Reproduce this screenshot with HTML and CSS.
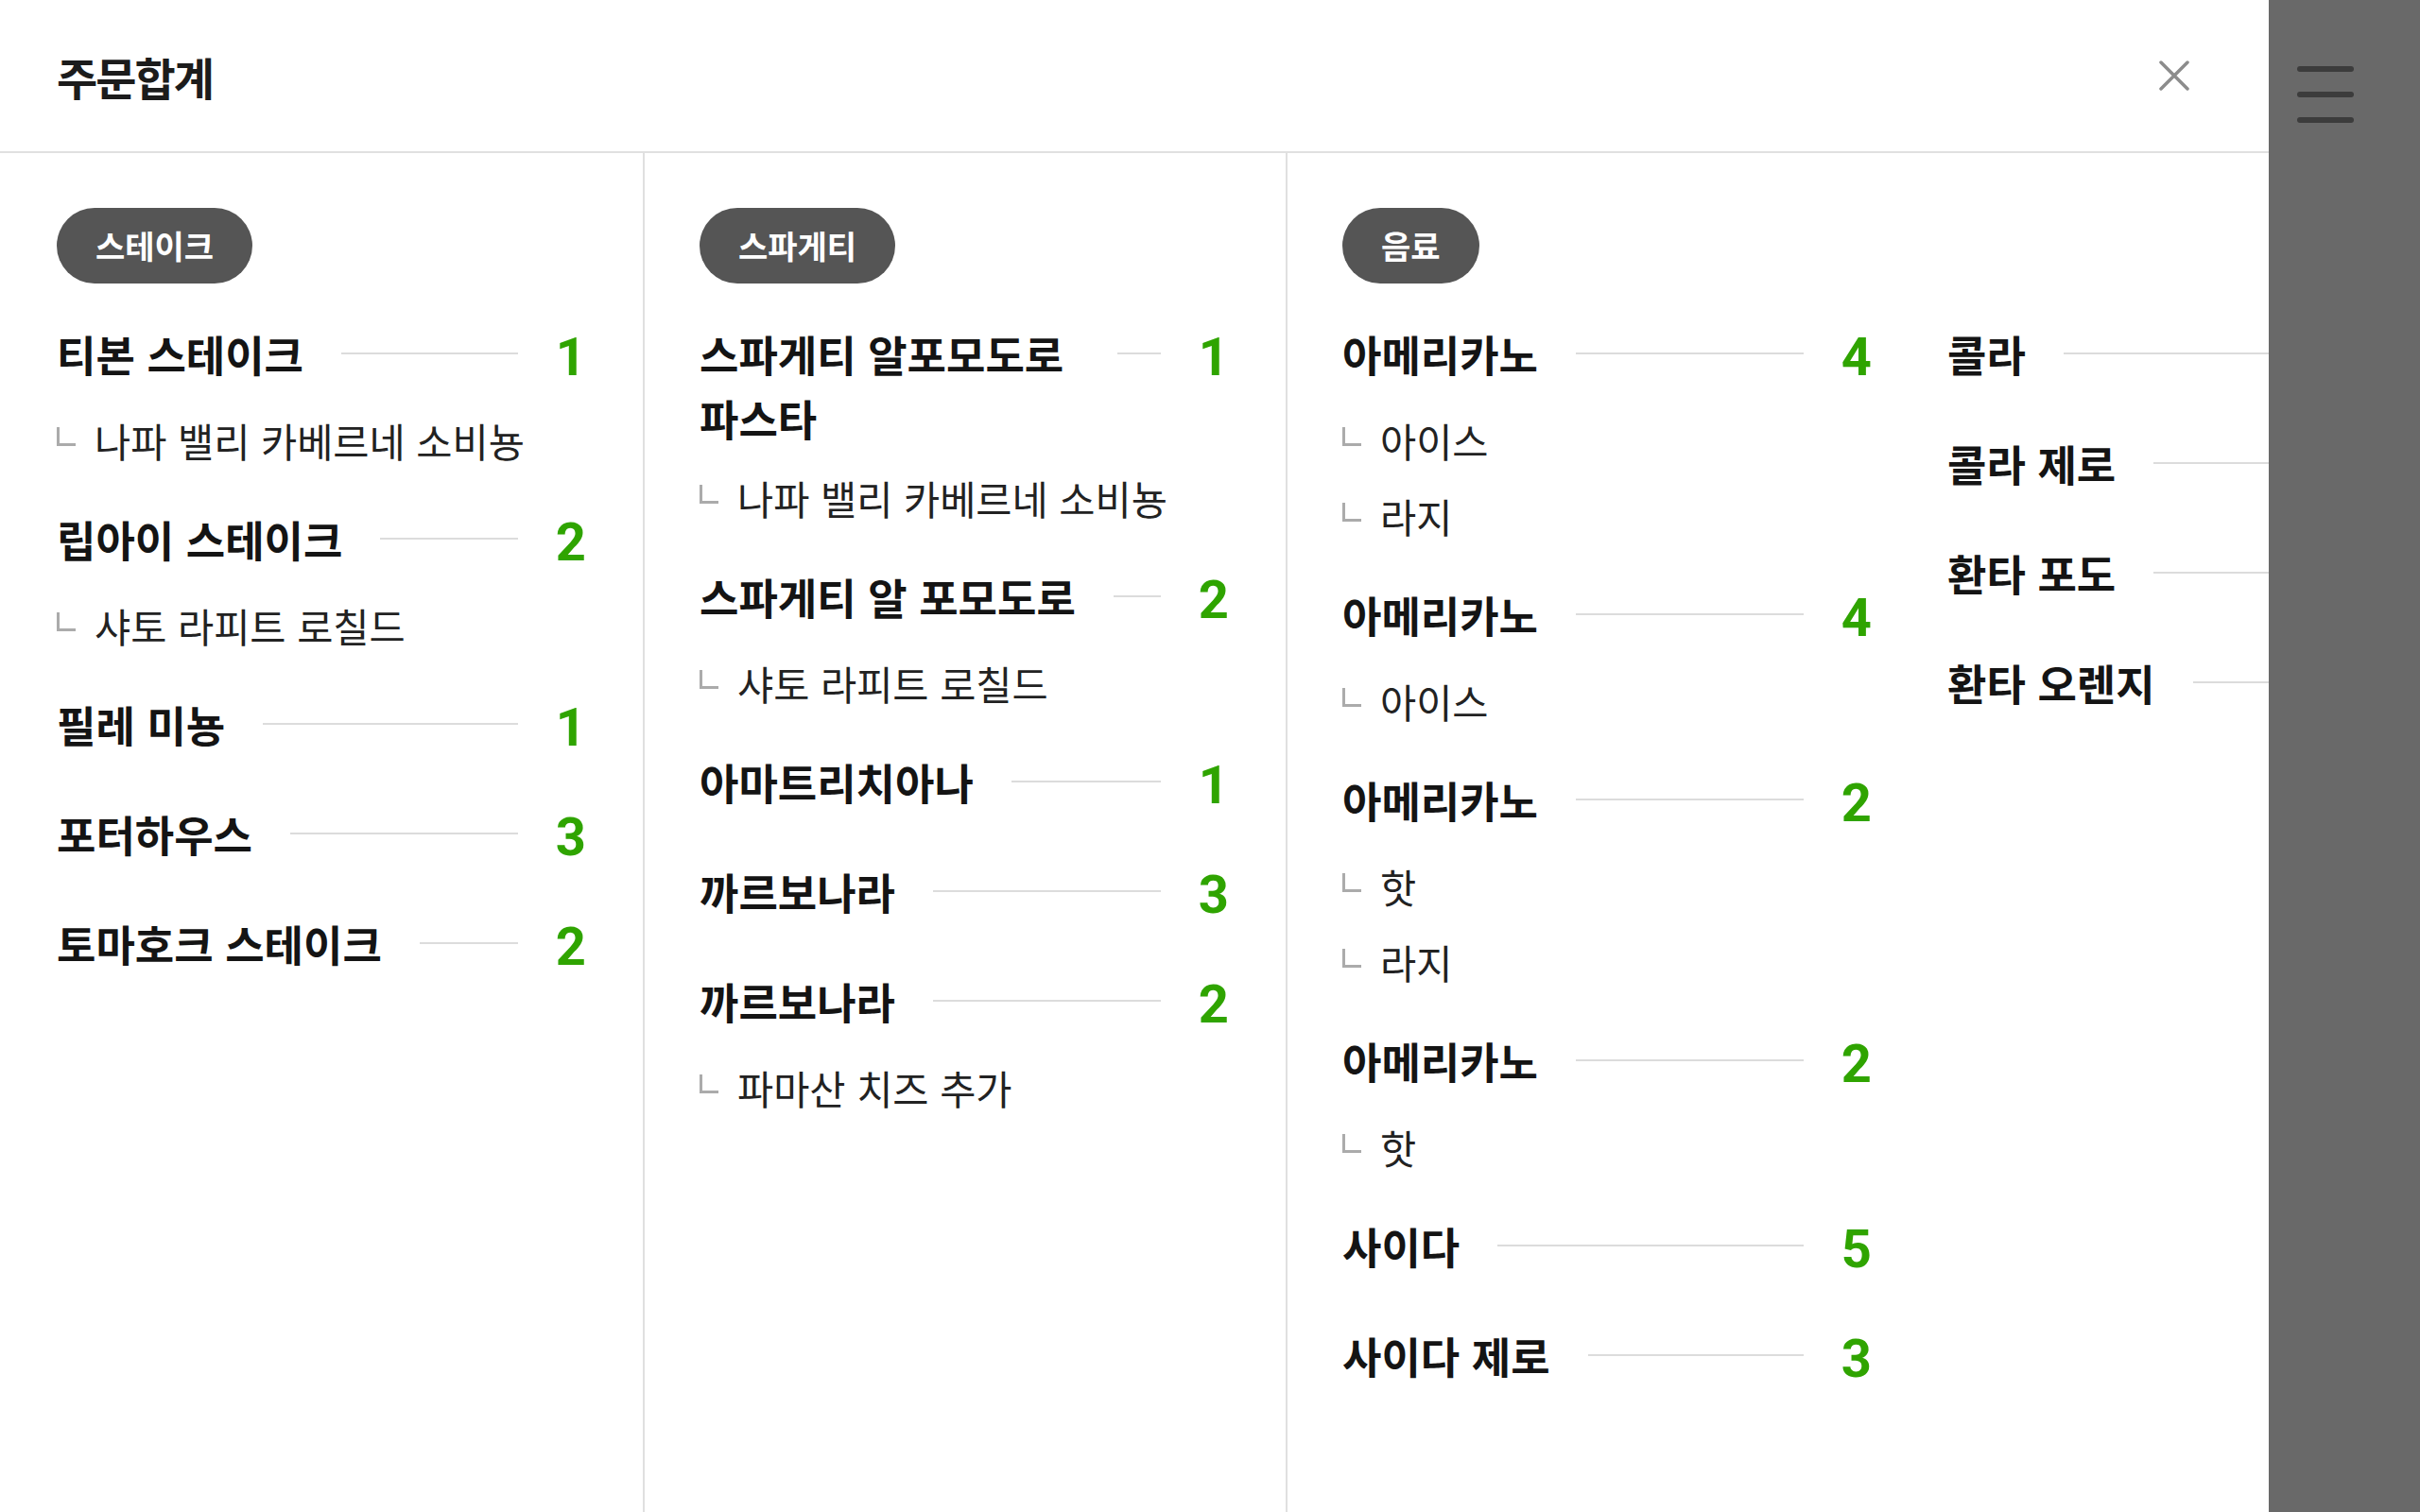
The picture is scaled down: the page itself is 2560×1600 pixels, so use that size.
FILE: index.html
```html
<!DOCTYPE html>
<html lang="ko">
<head>
<meta charset="utf-8">
<title>주문합계</title>
<link rel="stylesheet" href="styles.css">
</head>
<body>
<div class="screen">
  <section class="modal">
    <header class="modal-header">
      <h1 class="modal-title">주문합계</h1>
      <button class="close-btn" aria-label="닫기">
        <svg viewBox="0 0 32 32" width="32" height="32"><path d="M2 2 L30 30 M30 2 L2 30"/></svg>
      </button>
    </header>
    <div class="modal-body">
      <div class="category">
        <span class="pill">스테이크</span>
        <ul class="items">
          <li class="item">
            <div class="row"><span class="name">티본 스테이크</span><span class="rule"></span><span class="qty">1</span></div>
            <ul class="opts"><li class="opt"><span class="mark"></span>나파 밸리 카베르네 소비뇽</li></ul>
          </li>
          <li class="item">
            <div class="row"><span class="name">립아이 스테이크</span><span class="rule"></span><span class="qty">2</span></div>
            <ul class="opts"><li class="opt"><span class="mark"></span>샤토 라피트 로칠드</li></ul>
          </li>
          <li class="item">
            <div class="row"><span class="name">필레 미뇽</span><span class="rule"></span><span class="qty">1</span></div>
          </li>
          <li class="item">
            <div class="row"><span class="name">포터하우스</span><span class="rule"></span><span class="qty">3</span></div>
          </li>
          <li class="item">
            <div class="row"><span class="name">토마호크 스테이크</span><span class="rule"></span><span class="qty">2</span></div>
          </li>
        </ul>
      </div>
      <div class="category">
        <span class="pill">스파게티</span>
        <ul class="items">
          <li class="item">
            <div class="row"><span class="name">스파게티 알포모도로 파스타</span><span class="rule"></span><span class="qty">1</span></div>
            <ul class="opts"><li class="opt"><span class="mark"></span>나파 밸리 카베르네 소비뇽</li></ul>
          </li>
          <li class="item">
            <div class="row"><span class="name">스파게티 알 포모도로</span><span class="rule"></span><span class="qty">2</span></div>
            <ul class="opts"><li class="opt"><span class="mark"></span>샤토 라피트 로칠드</li></ul>
          </li>
          <li class="item">
            <div class="row"><span class="name">아마트리치아나</span><span class="rule"></span><span class="qty">1</span></div>
          </li>
          <li class="item">
            <div class="row"><span class="name">까르보나라</span><span class="rule"></span><span class="qty">3</span></div>
          </li>
          <li class="item">
            <div class="row"><span class="name">까르보나라</span><span class="rule"></span><span class="qty">2</span></div>
            <ul class="opts"><li class="opt"><span class="mark"></span>파마산 치즈 추가</li></ul>
          </li>
        </ul>
      </div>
      <div class="category category-wide">
        <span class="pill">음료</span>
        <ul class="items">
          <li class="item">
            <div class="row"><span class="name">아메리카노</span><span class="rule"></span><span class="qty">4</span></div>
            <ul class="opts"><li class="opt"><span class="mark"></span>아이스</li><li class="opt"><span class="mark"></span>라지</li></ul>
          </li>
          <li class="item">
            <div class="row"><span class="name">아메리카노</span><span class="rule"></span><span class="qty">4</span></div>
            <ul class="opts"><li class="opt"><span class="mark"></span>아이스</li></ul>
          </li>
          <li class="item">
            <div class="row"><span class="name">아메리카노</span><span class="rule"></span><span class="qty">2</span></div>
            <ul class="opts"><li class="opt"><span class="mark"></span>핫</li><li class="opt"><span class="mark"></span>라지</li></ul>
          </li>
          <li class="item">
            <div class="row"><span class="name">아메리카노</span><span class="rule"></span><span class="qty">2</span></div>
            <ul class="opts"><li class="opt"><span class="mark"></span>핫</li></ul>
          </li>
          <li class="item">
            <div class="row"><span class="name">사이다</span><span class="rule"></span><span class="qty">5</span></div>
          </li>
          <li class="item">
            <div class="row"><span class="name">사이다 제로</span><span class="rule"></span><span class="qty">3</span></div>
          </li>
          <li class="item">
            <div class="row"><span class="name">콜라</span><span class="rule"></span></div>
          </li>
          <li class="item">
            <div class="row"><span class="name">콜라 제로</span><span class="rule"></span></div>
          </li>
          <li class="item">
            <div class="row"><span class="name">환타 포도</span><span class="rule"></span></div>
          </li>
          <li class="item">
            <div class="row"><span class="name">환타 오렌지</span><span class="rule"></span></div>
          </li>
        </ul>
      </div>
    </div>
  </section>
  <aside class="backdrop">
    <div class="burger"><span></span><span></span><span></span></div>
  </aside>
</div>
</body>
</html>
```

FILE: styles.css
```css
* {
  box-sizing: border-box;
  margin: 0;
  padding: 0;
}

html,
body {
  width: 100%;
  height: 100%;
}

body {
  font-family: "Noto Sans CJK KR", "Noto Sans", sans-serif;
  background: #696969;
  overflow: hidden;
}

.screen {
  display: flex;
  height: 100vh;
}

.modal {
  flex: 0 0 2400px;
  height: 100%;
  background: #fff;
  display: flex;
  flex-direction: column;
  overflow: hidden;
}

.modal-header {
  flex: 0 0 162px;
  border-bottom: 2px solid #e0e0e0;
  display: flex;
  align-items: center;
  justify-content: space-between;
  padding: 0 84px 0 60px;
}

.modal-title {
  font-size: 47px;
  font-weight: 700;
  line-height: 1;
  letter-spacing: -2px;
  color: #1c1c1c;
}

.close-btn {
  width: 32px;
  height: 32px;
  border: 0;
  background: none;
  display: block;
}

.close-btn svg {
  display: block;
  fill: none;
  stroke: #8c8c8c;
  stroke-width: 3.5;
  stroke-linecap: round;
}

.modal-body {
  flex: 1;
  min-height: 0;
  display: flex;
}

.category {
  flex: 0 0 680px;
  display: flex;
  flex-direction: column;
  padding: 58px 60px 60px 60px;
}

.category + .category {
  border-left: 2px solid #e0e0e0;
  padding-left: 58px;
}

.category-wide {
  flex: 1 1 auto;
  min-width: 0;
}

.pill {
  align-self: flex-start;
  height: 80px;
  line-height: 80px;
  padding: 0 41px;
  border-radius: 40px;
  background: #555555;
  color: #fff;
  font-size: 34px;
  font-weight: 700;
}

.items {
  list-style: none;
  margin-top: 41px;
  flex: 1;
  min-height: 0;
  display: flex;
  flex-direction: column;
  flex-wrap: wrap;
  align-content: flex-start;
  gap: 41px 80px;
}

.item {
  width: 560px;
  flex: 0 0 auto;
}

.row {
  display: flex;
  align-items: flex-start;
  min-height: 75px;
}

.name {
  flex: 0 1 auto;
  font-size: 45px;
  font-weight: 700;
  line-height: 68px;
  color: #141414;
}

.rule {
  flex: 1 0 46px;
  height: 2px;
  margin: 32px 40px 0;
  background: #dcdcdc;
}

.qty {
  flex: 0 0 auto;
  font-family: Roboto, "Liberation Sans", sans-serif;
  font-size: 56px;
  font-weight: 700;
  line-height: 75px;
  color: #2fa400;
}

.opts {
  list-style: none;
}

.opt {
  display: flex;
  align-items: flex-start;
  margin-top: 20px;
  font-size: 41.5px;
  line-height: 60px;
  color: #222;
}

.mark {
  flex: 0 0 20px;
  height: 20px;
  margin: 16px 20px 0 0;
  border-left: 3px solid #ababab;
  border-bottom: 3px solid #ababab;
}

.backdrop {
  flex: 1;
  background: #696969;
  padding: 70px 0 0 30px;
}

.burger span {
  display: block;
  width: 60px;
  height: 6px;
  border-radius: 3px;
  background: #3c3c3c;
  margin-bottom: 21px;
}
```
